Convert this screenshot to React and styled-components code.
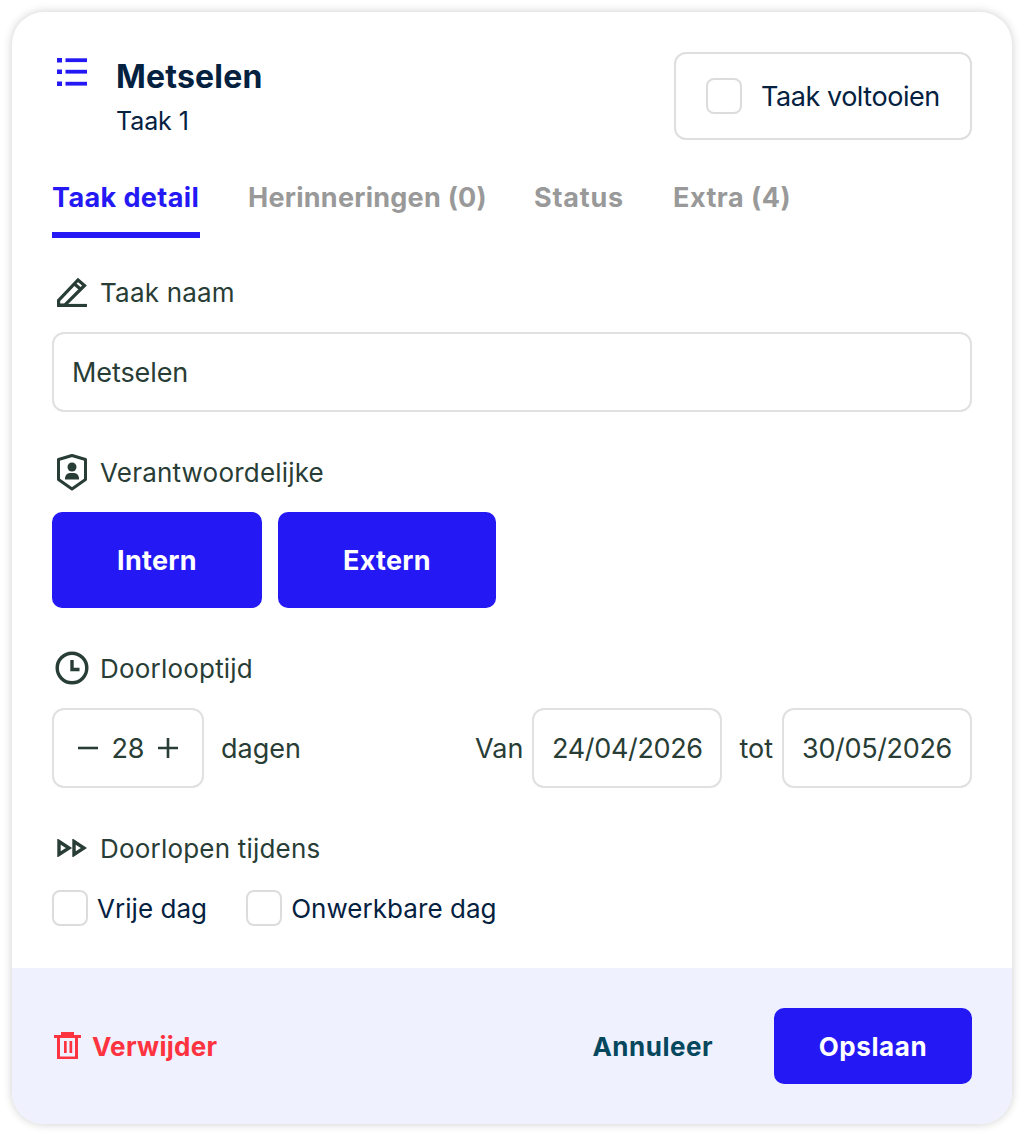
import React from 'react'
import styled, { createGlobalStyle } from 'styled-components'

const Global = createGlobalStyle`
  html, body {
    margin: 0;
    padding: 0;
    background: #fff;
  }
  * {
    box-sizing: border-box;
  }
`

const Page = styled.div`
  padding: 12px;
  font-family: Inter, "Liberation Sans", sans-serif;
`

const Card = styled.div`
  width: 1000px;
  height: 1112px;
  display: flex;
  flex-direction: column;
  border-radius: 32px;
  overflow: hidden;
  background: #fff;
  box-shadow: 0 0 10px rgba(0, 0, 0, 0.2);
`

const Body = styled.div`
  flex: 1;
  padding: 40px 40px 0;
`

const Header = styled.div`
  display: flex;
  justify-content: space-between;
  align-items: flex-start;
  height: 88px;
`

const HeaderLeft = styled.div`
  display: flex;
  padding: 6px 0 0 5px;
`

const TitleBlock = styled.div`
  margin-left: 29px;
`

const Title = styled.div`
  font-size: 32px;
  line-height: 38px;
  font-weight: 700;
  letter-spacing: 0.2px;
  color: #04213f;
`

const Subtitle = styled.div`
  margin-top: 9px;
  font-size: 25px;
  line-height: 32px;
  letter-spacing: -0.1px;
  color: #04213f;
`

const CompleteBox = styled.div`
  width: 298px;
  height: 88px;
  display: flex;
  align-items: center;
  padding-left: 30px;
  gap: 19px;
  border: 2px solid #dedede;
  border-radius: 12px;
`

const Check = styled.span`
  flex: none;
  width: 36px;
  height: 36px;
  border: 2px solid #dcdcdc;
  border-radius: 8px;
  background: #fff;
`

const CheckText = styled.span`
  font-size: 27px;
  letter-spacing: -0.45px;
  color: #04213f;
`

const Tabs = styled.div`
  display: flex;
  gap: 48px;
  margin-top: 24px;
  margin-bottom: 34px;
`

const Tab = styled.div`
  width: ${p => p.$w}px;
  height: 74px;
  padding-top: 14px;
  font-size: 27px;
  line-height: 40px;
  font-weight: 700;
  letter-spacing: ${p => p.$ls}px;
  white-space: nowrap;
  color: ${p => (p.$active ? '#2419f5' : '#999999')};
  border-bottom: 6px solid ${p => (p.$active ? '#2419f5' : 'transparent')};
`

const Label = styled.div`
  display: flex;
  align-items: center;
  height: 40px;
  margin-bottom: 20px;
  font-size: 26px;
  letter-spacing: 0.2px;
  color: #283d35;
`

const LabelIcon = styled.span`
  display: flex;
  justify-content: center;
  align-items: center;
  width: 40px;
  margin-right: 8px;
`

const Field = styled.div`
  display: flex;
  align-items: center;
  height: 80px;
  padding: 0 ${p => (p.$center ? 0 : 18)}px;
  justify-content: ${p => (p.$center ? 'center' : 'flex-start')};
  width: ${p => (p.$w ? p.$w + 'px' : 'auto')};
  flex: none;
  border: 2px solid #e0e0e0;
  border-radius: 12px;
  font-size: 27px;
  letter-spacing: ${p => (p.$center ? '-0.35px' : '-0.1px')};
  color: #283d35;
`

const Section = styled.div`
  margin-bottom: 40px;
`

const ButtonRow = styled.div`
  display: flex;
  gap: 16px;
`

const ChoiceButton = styled.div`
  width: ${p => p.$w}px;
  height: 96px;
  display: flex;
  align-items: center;
  justify-content: center;
  border-radius: 10px;
  background: #2419f5;
  color: #fff;
  font-size: 27px;
  font-weight: 700;
  letter-spacing: 0.3px;
`

const DurationRow = styled.div`
  display: flex;
  align-items: center;
  color: #283d35;
  font-size: 27px;
`

const Stepper = styled(Field)`
  width: 152px;
  justify-content: space-between;
  padding: 0 24px;
`

const RowText = styled.span`
  margin: ${p => p.$m || '0'};
`

const Spacer = styled.div`
  flex: 1;
`

const CheckRow = styled.div`
  display: flex;
  margin-top: 22px;
  gap: 39px;
`

const CheckItem = styled.div`
  display: flex;
  align-items: center;
  gap: 9px;
  font-size: 26px;
  letter-spacing: 0.05px;
  color: #04213f;
`

const Footer = styled.div`
  height: 156px;
  flex: none;
  display: flex;
  align-items: center;
  padding: 0 40px 0 42px;
  background: #eff1fe;
`

const Delete = styled.div`
  display: flex;
  align-items: center;
  gap: 11px;
  font-size: 26px;
  font-weight: 700;
  letter-spacing: 0.3px;
  color: #fe3340;
`

const Cancel = styled.div`
  margin-right: 61px;
  font-size: 26px;
  font-weight: 700;
  letter-spacing: 0.5px;
  color: #05485e;
`

const SaveButton = styled.div`
  width: 198px;
  height: 76px;
  display: flex;
  align-items: center;
  justify-content: center;
  border-radius: 10px;
  background: #2419f5;
  color: #fff;
  font-size: 26px;
  font-weight: 700;
  letter-spacing: 0.6px;
`

const ListIcon = () => (
  <svg width="30" height="28" viewBox="0 0 30 28" fill="#2419f5">
    <rect x="0" y="0" width="5" height="4.5" />
    <rect x="0" y="11.5" width="5" height="4.5" />
    <rect x="0" y="23.5" width="5" height="4.5" />
    <rect x="8.5" y="0.3" width="21.5" height="3.8" />
    <rect x="8.5" y="11.8" width="21.5" height="3.8" />
    <rect x="8.5" y="23.8" width="21.5" height="3.8" />
  </svg>
)

const PencilIcon = () => (
  <svg width="30" height="30" viewBox="0 0 30 30" fill="none" stroke="#283d35" strokeWidth="3.2">
    <path d="M1.6 28 V23.5 L21 3 L27.5 8.5 L8 28 Z" />
    <path d="M17.5 7 L24 12.5" />
    <path d="M0 28.5 H30" />
  </svg>
)

const ShieldIcon = () => (
  <svg width="30" height="37" viewBox="0 0 30 37" fill="none">
    <path d="M1.5 5.5 L15 1.5 L28.5 5.5 V25.5 L15 35 L1.5 25.5 Z" stroke="#283d35" strokeWidth="3" strokeLinejoin="round" />
    <circle cx="15" cy="13" r="4.5" fill="#283d35" />
    <path d="M8 25.5 Q8 19 13 19 H17 Q22 19 22 25.5 Z" fill="#283d35" />
  </svg>
)

const ClockIcon = () => (
  <svg width="34" height="34" viewBox="0 0 34 34" fill="none" stroke="#283d35" strokeWidth="3.4">
    <circle cx="17" cy="17" r="14.8" />
    <path d="M17 9 V18.5 H24.5" />
  </svg>
)

const ForwardIcon = () => (
  <svg width="30" height="18" viewBox="0 0 30 18" fill="none" stroke="#283d35" strokeWidth="3.4">
    <path d="M2 2.5 L12 9 L2 15.5 Z" />
    <path d="M17 2.5 L27 9 L17 15.5 Z" />
  </svg>
)

const TrashIcon = () => (
  <svg width="27" height="28" viewBox="0 0 27 28" fill="#fe3340">
    <rect x="7" y="0" width="13" height="3" />
    <rect x="0" y="3" width="27" height="3" />
    <path d="M3 6 H24 V27 H3 Z M6 6 V24.5 H21 V6 Z" fillRule="evenodd" />
    <rect x="10" y="9" width="2.7" height="12" />
    <rect x="15.5" y="9" width="2.7" height="12" />
  </svg>
)

const MinusIcon = () => (
  <svg width="20" height="20" viewBox="0 0 20 20" stroke="#283d35" strokeWidth="2.6">
    <path d="M0 10 H20" />
  </svg>
)

const PlusIcon = () => (
  <svg width="20" height="20" viewBox="0 0 20 20" stroke="#283d35" strokeWidth="2.6">
    <path d="M0 10 H20 M10 0 V20" />
  </svg>
)

const App = () => {
  return (
    <Page>
      <Global />
      <Card>
        <Body>
          <Header>
            <HeaderLeft>
              <ListIcon />
              <TitleBlock>
                <Title>Metselen</Title>
                <Subtitle>Taak 1</Subtitle>
              </TitleBlock>
            </HeaderLeft>
            <CompleteBox>
              <Check />
              <CheckText>Taak voltooien</CheckText>
            </CompleteBox>
          </Header>

          <Tabs>
            <Tab $active $w={148} $ls={0.4}>Taak detail</Tab>
            <Tab $w={238} $ls={0.25}>Herinneringen (0)</Tab>
            <Tab $w={91} $ls={0.8}>Status</Tab>
            <Tab $w={116} $ls={0.5}>Extra (4)</Tab>
          </Tabs>

          <Section>
            <Label>
              <LabelIcon><PencilIcon /></LabelIcon>
              Taak naam
            </Label>
            <Field>Metselen</Field>
          </Section>

          <Section>
            <Label>
              <LabelIcon><ShieldIcon /></LabelIcon>
              Verantwoordelijke
            </Label>
            <ButtonRow>
              <ChoiceButton $w={210}>Intern</ChoiceButton>
              <ChoiceButton $w={218}>Extern</ChoiceButton>
            </ButtonRow>
          </Section>

          <Section>
            <Label>
              <LabelIcon><ClockIcon /></LabelIcon>
              Doorlooptijd
            </Label>
            <DurationRow>
              <Stepper>
                <MinusIcon />
                <span>28</span>
                <PlusIcon />
              </Stepper>
              <RowText $m="0 0 0 17px">dagen</RowText>
              <Spacer />
              <RowText $m="0 9px 0 0">Van</RowText>
              <Field $w={190} $center>24/04/2026</Field>
              <RowText $m="0 9px 0 17px">tot</RowText>
              <Field $w={190} $center>30/05/2026</Field>
            </DurationRow>
          </Section>

          <Label>
            <LabelIcon><ForwardIcon /></LabelIcon>
            Doorlopen tijdens
          </Label>
          <CheckRow>
            <CheckItem><Check />Vrije dag</CheckItem>
            <CheckItem><Check />Onwerkbare dag</CheckItem>
          </CheckRow>
        </Body>

        <Footer>
          <Delete><TrashIcon />Verwijder</Delete>
          <Spacer />
          <Cancel>Annuleer</Cancel>
          <SaveButton>Opslaan</SaveButton>
        </Footer>
      </Card>
    </Page>
  )
}

export default App
